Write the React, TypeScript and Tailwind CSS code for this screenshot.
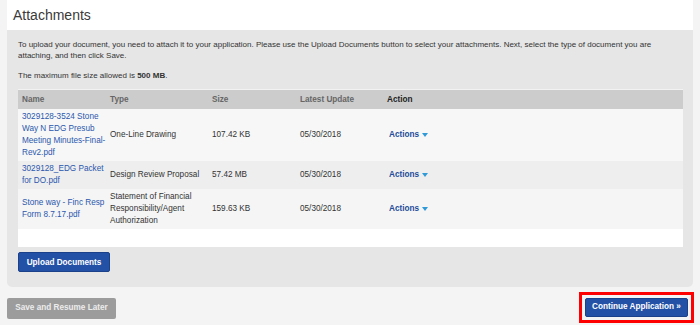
const rows = [
	{
		name: ["3029128-3524 Stone", "Way N EDG Presub", "Meeting Minutes-Final-", "Rev2.pdf"],
		type: ["One-Line Drawing"],
		size: "107.42 KB",
		date: "05/30/2018",
		bg: "bg-[#f7f7f7]",
	},
	{
		name: ["3029128_EDG Packet", "for DO.pdf"],
		type: ["Design Review Proposal"],
		size: "57.42 MB",
		date: "05/30/2018",
		bg: "bg-[#eeeeee]",
	},
	{
		name: ["Stone way - Finc Resp", "Form 8.7.17.pdf"],
		type: ["Statement of Financial", "Responsibility/Agent", "Authorization"],
		size: "159.63 KB",
		date: "05/30/2018",
		bg: "bg-[#f5f5f5]",
	},
];

function Lines({ lines }: { lines: string[] }) {
	return (
		<>
			{lines.map((l, i) => (
				<div key={i} className="whitespace-nowrap">{l}</div>
			))}
		</>
	);
}

export default function App() {
	return (
		<div className="w-[700px] h-[325px] bg-[#f4f4f4] px-[7px] text-[#333] overflow-hidden" style={{ fontFamily: '"Liberation Sans", Arial, sans-serif' }}>
			<div className="bg-white h-[30px] pl-[6px] pt-[5px] text-[14px] text-[#3a3a3a]">Attachments</div>

			<div className="bg-[#e6e6e6] rounded-b-[5px] h-[257px] pl-[11px] pr-[10px] pt-[9px] text-[8px] leading-[11px]">
				<p>
					To upload your document, you need to attach it to your application. Please use the Upload Documents button to select your attachments. Next, select the type of document you are attaching, and then click Save.
				</p>
				<p className="mt-[9px]">
					The maximum file size allowed is <b>500 MB</b>.
				</p>

				<div className="bg-white mt-[8px] h-[158px] border-t border-[#f2f2f2]">
					<table className="w-full table-fixed border-collapse text-[8.2px] leading-[12px]">
						<colgroup>
							<col className="w-[88px]" />
							<col className="w-[102px]" />
							<col className="w-[88px]" />
							<col className="w-[87px]" />
							<col />
						</colgroup>
						<thead>
							<tr className="bg-[#cccccc] h-[19px] text-left font-bold">
								<th className="pl-[4px] text-[#666]">Name</th>
								<th className="pl-[4px] text-[#666]">Type</th>
								<th className="pl-[4px] text-[#666]">Size</th>
								<th className="pl-[4px] text-[#666]">Latest Update</th>
								<th className="pl-[4px] text-[#222]">Action</th>
							</tr>
						</thead>
						<tbody>
							{rows.map((r, i) => (
								<tr key={i} className={r.bg}>
									<td className="pl-[4px] py-[2px] text-[#2b57ad] align-middle">
										<Lines lines={r.name} />
									</td>
									<td className="pl-[4px] py-[2px] align-middle">
										<Lines lines={r.type} />
									</td>
									<td className="pl-[4px] py-[2px] align-middle">{r.size}</td>
									<td className="pl-[4px] py-[2px] align-middle">{r.date}</td>
									<td className="pl-[6px] py-[2px] align-middle">
										<span className="inline-flex items-center gap-[3px] font-bold text-[#1e4b9a]">
											Actions
											<svg width="6" height="4" viewBox="0 0 6 4">
												<path d="M0 0 L6 0 L3 4 Z" fill="#2e9ad8" />
											</svg>
										</span>
									</td>
								</tr>
							))}
						</tbody>
					</table>
				</div>

				<button className="mt-[5px] h-[20px] w-[92px] rounded-[2px] bg-[#2351a6] border border-[#1b418a] text-white font-bold text-[8.2px]">
					Upload Documents
				</button>
			</div>

			<div className="flex items-start justify-between mt-[5px]">
				<button className="mt-[6px] h-[21px] w-[109px] rounded-[2px] bg-[#9c9c9c] text-[#ececec] font-bold text-[8.2px]">
					Save and Resume Later
				</button>
				<div className="border-[3px] border-[#ff0000] p-[3px] mr-[-1px]">
					<button className="block h-[19px] w-[103px] rounded-[2px] bg-[#2351a6] border border-[#1b418a] text-white font-bold text-[8.2px]">
						Continue Application »
					</button>
				</div>
			</div>
		</div>
	);
}
